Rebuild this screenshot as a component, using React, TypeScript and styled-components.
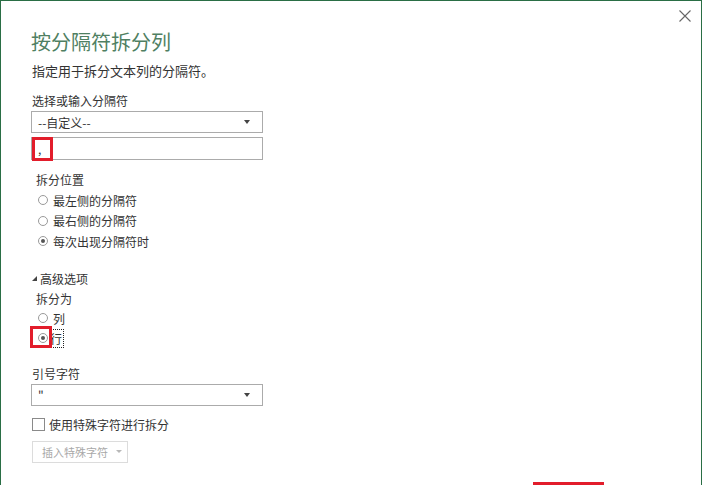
import * as React from 'react'
import styled, { createGlobalStyle } from 'styled-components'

const GlobalStyle = createGlobalStyle`
  html, body {
    margin: 0;
    padding: 0;
    background: #ffffff;
  }
  body {
    font-family: "Noto Sans CJK SC", "Noto Sans", "Liberation Sans", sans-serif;
    color: #333333;
  }
`

const Window = styled.div`
  position: relative;
  box-sizing: border-box;
  width: 702px;
  height: 485px;
  overflow: hidden;
  background: #ffffff;
  border: 1px solid #2a6e45;
  border-bottom: none;
  padding: 27px 0 0 30px;
  font-size: 12px;
`

const CloseButton = styled.button`
  position: absolute;
  top: 7px;
  right: 9px;
  width: 15px;
  height: 15px;
  padding: 0;
  border: none;
  background: transparent;
  display: flex;
  align-items: center;
  justify-content: center;
`

const Title = styled.h1`
  margin: 0;
  font-size: 20px;
  line-height: 28px;
  font-weight: 400;
  color: #4f7f62;
`

const Text = styled.div<{ $indent?: number; $top?: number; $size?: number }>`
  margin-top: ${p => p.$top ?? 0}px;
  padding-left: ${p => p.$indent ?? 0}px;
  height: 20px;
  line-height: 20px;
  font-size: ${p => p.$size ?? 12}px;
  color: #333333;
  white-space: nowrap;
`

const Field = styled.div<{ $top?: number; $height?: number }>`
  position: relative;
  box-sizing: border-box;
  margin-top: ${p => p.$top ?? 0}px;
  width: 232px;
  height: ${p => p.$height ?? 22}px;
  border: 1px solid #ababab;
  background: #ffffff;
  display: flex;
  align-items: center;
  padding: 0 7px 0 6px;
  font-size: 12px;
  color: #333333;
`

const FieldValue = styled.span`
  flex: 1;
  white-space: nowrap;
`

const Caret = styled.span`
  width: 0;
  height: 0;
  border-left: 3.5px solid transparent;
  border-right: 3.5px solid transparent;
  border-top: 4px solid #444444;
  margin-right: 5px;
`

const Group = styled.div<{ $top?: number }>`
  margin-top: ${p => p.$top ?? 0}px;
  padding-left: 5px;
`

const RadioRow = styled.div<{ $height?: number }>`
  display: flex;
  align-items: center;
  gap: 5px;
  height: ${p => p.$height ?? 20.5}px;
  font-size: 12px;
  color: #333333;
  white-space: nowrap;
`

const RadioWrap = styled.span`
  position: relative;
  display: flex;
  align-items: center;
  padding-left: 2px;
`

const RadioCircle = styled.span<{ $checked?: boolean }>`
  box-sizing: border-box;
  width: 10px;
  height: 10px;
  border-radius: 50%;
  border: 1px solid #9a9a9a;
  background: #ffffff;
  display: flex;
  align-items: center;
  justify-content: center;
  &::after {
    content: '';
    display: ${p => (p.$checked ? 'block' : 'none')};
    width: 4px;
    height: 4px;
    border-radius: 50%;
    background: #555555;
  }
`

const FocusLabel = styled.span`
  outline: 1px dotted #222222;
  outline-offset: 0;
  line-height: 17px;
  padding: 0 1px 0 0;
  margin-left: -3px;
`

const Highlight = styled.span<{ $l: number; $t: number; $w: number; $h: number }>`
  position: absolute;
  left: ${p => p.$l}px;
  top: ${p => p.$t}px;
  width: ${p => p.$w}px;
  height: ${p => p.$h}px;
  box-sizing: border-box;
  border: 3px solid #e21d2b;
  pointer-events: none;
`

const Expander = styled.div<{ $top?: number }>`
  margin-top: ${p => p.$top ?? 0}px;
  display: flex;
  align-items: center;
  gap: 2px;
  height: 20px;
  font-size: 12px;
  color: #333333;
`

const CheckRow = styled.div<{ $top?: number }>`
  margin-top: ${p => p.$top ?? 0}px;
  display: flex;
  align-items: center;
  gap: 4px;
  height: 20px;
  font-size: 12px;
  color: #333333;
  padding-left: 1px;
`

const CheckBox = styled.span`
  box-sizing: border-box;
  width: 13px;
  height: 13px;
  border: 1px solid #8a8a8a;
  background: #ffffff;
`

const InsertButton = styled.button`
  box-sizing: border-box;
  margin-top: 6px;
  margin-left: 1px;
  height: 22px;
  width: 96px;
  display: flex;
  align-items: center;
  gap: 8px;
  padding: 0 0 0 9px;
  border: 1px solid #dcdcdc;
  background: #ffffff;
  font-family: inherit;
  font-size: 11px;
  color: #a8a8a8;
`

const SmallCaret = styled.span`
  width: 0;
  height: 0;
  border-left: 3px solid transparent;
  border-right: 3px solid transparent;
  border-top: 3px solid #b8b8b8;
`

const BottomMark = styled.div`
  position: absolute;
  left: 532px;
  top: 481px;
  width: 71px;
  height: 10px;
  box-sizing: border-box;
  border: 3px solid #e21d2b;
`

export default function App() {
  return (
    <>
      <GlobalStyle />
      <Window>
        <CloseButton aria-label="关闭">
          <svg width="12" height="12" viewBox="0 0 12 12">
            <path d="M0.5 0.5 L11.5 11.5 M11.5 0.5 L0.5 11.5" stroke="#666" strokeWidth="1.1" />
          </svg>
        </CloseButton>

        <Title>按分隔符拆分列</Title>
        <Text $top={5} $indent={1} $size={13}>指定用于拆分文本列的分隔符。</Text>

        <Text $top={10} $indent={1}>选择或输入分隔符</Text>
        <Field>
          <FieldValue>--自定义--</FieldValue>
          <Caret />
        </Field>
        <Field $top={4} $height={23}>
          <FieldValue>,</FieldValue>
          <Highlight $l={0} $t={-1} $w={21} $h={24} />
        </Field>

        <Group $top={10}>
          <Text>拆分位置</Text>
          <RadioRow>
            <RadioWrap><RadioCircle /></RadioWrap>
            最左侧的分隔符
          </RadioRow>
          <RadioRow>
            <RadioWrap><RadioCircle /></RadioWrap>
            最右侧的分隔符
          </RadioRow>
          <RadioRow>
            <RadioWrap><RadioCircle $checked /></RadioWrap>
            每次出现分隔符时
          </RadioRow>
        </Group>

        <Expander $top={17}>
          <svg width="7" height="7" viewBox="0 0 7 7">
            <polygon points="6,1 6,6 1,6" fill="#444" />
          </svg>
          高级选项
        </Expander>
        <Group>
          <Text>拆分为</Text>
          <RadioRow $height={19}>
            <RadioWrap><RadioCircle /></RadioWrap>
            列
          </RadioRow>
          <RadioRow $height={21}>
            <RadioWrap>
              <RadioCircle $checked />
              <Highlight $l={-6} $t={-7} $w={22} $h={22} />
            </RadioWrap>
            <FocusLabel>行</FocusLabel>
          </RadioRow>
        </Group>

        <Text $top={15} $indent={1}>引号字符</Text>
        <Field>
          <FieldValue>"</FieldValue>
          <Caret />
        </Field>

        <CheckRow $top={9}>
          <CheckBox />
          使用特殊字符进行拆分
        </CheckRow>
        <InsertButton disabled>
          插入特殊字符
          <SmallCaret />
        </InsertButton>

        <BottomMark />
      </Window>
    </>
  )
}
